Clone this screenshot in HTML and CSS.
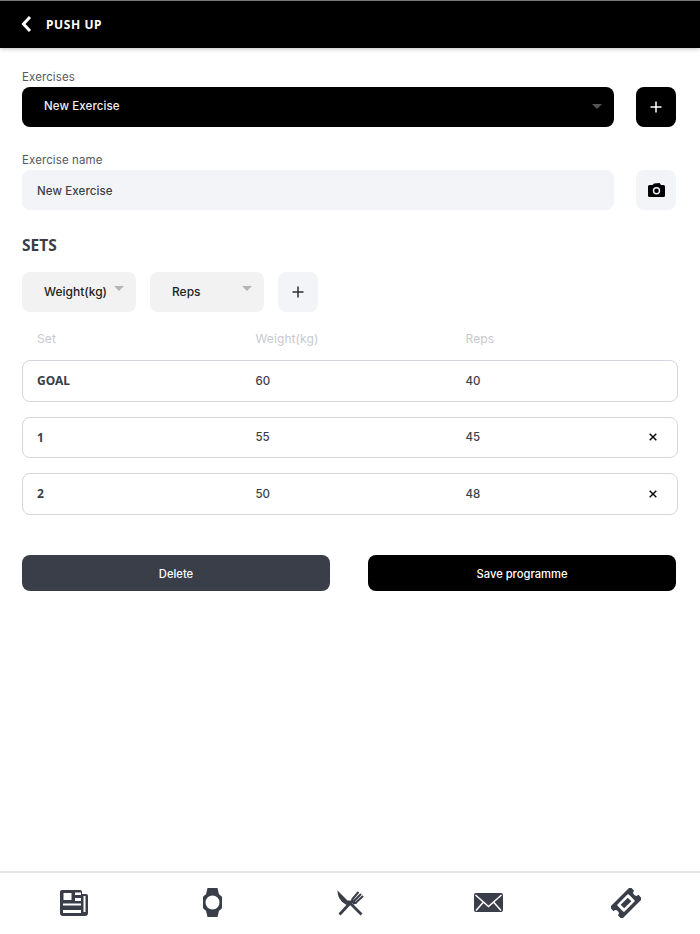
FILE: index.html
```html
<!DOCTYPE html>
<html lang="en">
<head>
<meta charset="utf-8">
<title>Push Up</title>
<link rel="stylesheet" href="styles.css">
</head>
<body>
<div class="page">
  <header class="topbar">
    <svg class="back" width="12" height="18" viewBox="0 0 12 18"><path d="M10 2 3.500 9 10 16" fill="none" stroke="#fff" stroke-width="3"/></svg>
    <span class="title">PUSH UP</span>
  </header>
  <main class="content">
    <label class="label first">Exercises</label>
    <div class="line">
      <div class="select select-dark"><span>New Exercise</span><i class="caret caret-dark"></i></div>
      <button class="square square-dark"><svg width="14" height="14" viewBox="0 0 14 14"><path d="M7 1.500v11M1.500 7h11" stroke="#fff" stroke-width="1.500"/></svg></button>
    </div>
    <label class="label second">Exercise name</label>
    <div class="line">
      <div class="input">New Exercise</div>
      <button class="square square-light"><svg width="17" height="14" viewBox="0 0 17 14"><path fill-rule="evenodd" fill="#000" d="M6 .5 11.500 0l1.500 2h2.500a1.500 1.500 0 0 1 1.500 1.500v9a1.500 1.500 0 0 1-1.500 1.500h-14A1.500 1.500 0 0 1 0 12.500v-9A1.500 1.500 0 0 1 1.500 2H4.500zM8.500 4a3.700 3.700 0 1 0 0 7.400 3.700 3.700 0 0 0 0-7.400zm0 1.400a2.300 2.300 0 1 1 0 4.600 2.300 2.300 0 0 1 0-4.600z"/></svg></button>
    </div>
    <h2 class="sets">SETS</h2>
    <div class="filters">
      <div class="chip chip-weight"><span>Weight(kg)</span><i class="caret caret-chip"></i></div>
      <div class="chip chip-reps"><span>Reps</span><i class="caret caret-chip"></i></div>
      <button class="square square-light"><svg width="12" height="12" viewBox="0 0 12 12"><path d="M6 .5v11M.5 6h11" stroke="#2c2f36" stroke-width="1.500"/></svg></button>
    </div>
    <div class="cols cols-head"><span>Set</span><span>Weight(kg)</span><span>Reps</span></div>
    <div class="cols row"><b>GOAL</b><span>60</span><span>40</span></div>
    <div class="cols row"><b>1</b><span>55</span><span>45</span><svg class="x" width="8" height="8" viewBox="0 0 8 8"><path d="M.7.7l6.600 6.600M7.300.7.700 7.300" stroke="#000" stroke-width="1.400"/></svg></div>
    <div class="cols row"><b>2</b><span>50</span><span>48</span><svg class="x" width="8" height="8" viewBox="0 0 8 8"><path d="M.7.7l6.600 6.600M7.300.7.700 7.300" stroke="#000" stroke-width="1.400"/></svg></div>
    <div class="actions">
      <button class="action action-delete">Delete</button>
      <button class="action action-save">Save programme</button>
    </div>
  </main>
  <nav class="tabbar">
    <div class="tab"><svg width="28" height="26" viewBox="0 0 28 26"><path fill="#3a3e48" fill-rule="evenodd" d="M2 0h18a2 2 0 0 1 2 2v2h4a2 2 0 0 1 2 2v17a3 3 0 0 1-3 3H3a3 3 0 0 1-3-3V2a2 2 0 0 1 2-2zM3.500 3v7h8V3zM15 2.500V5h6V2.500zM15 8v3h6V8zM3 13.500v2h18v-2zM3 20v3h18v-3zM23.500 6v16h2V6z"/></svg></div>
    <div class="tab"><svg width="19" height="29" viewBox="0 0 19 29"><path fill="#3a3e48" fill-rule="evenodd" d="M4.500 0h10l1.500 6.300a9.500 9.500 0 0 1 0 16.400L14.500 29h-10L3 22.700A9.500 9.500 0 0 1 3 6.300zM9.500 7.500a7 7 0 1 0 0 14 7 7 0 0 0 0-14z"/></svg></div>
    <div class="tab"><svg width="27" height="26" viewBox="0 0 27 26"><path fill="#3a3e48" d="M.5.500 14 14l-2.500 2L8 14C3 11 .5 6 .5.500z"/><path fill="none" stroke="#3a3e48" stroke-width="2.800" d="M11 11 24.500 24.500M2.500 24.500 16 10"/><path fill="none" stroke="#3a3e48" stroke-width="2" stroke-linecap="round" d="M15.500 9 21 2.500M17.500 10.500 23.500 4.500M19 12.500 25.500 6.500"/><path fill="#3a3e48" d="M15 8.500 20 13.500 16.500 14.500 14 11.500z"/></svg></div>
    <div class="tab"><svg width="29" height="19" viewBox="0 0 29 19"><rect width="29" height="19" rx="2" fill="#3a3e48"/><path d="M1.500 2 14.500 13.500 27.500 2M2 17.500 9.500 9M27 17.500 19.500 9" fill="none" stroke="#fff" stroke-width="1.500"/></svg></div>
    <div class="tab"><svg width="30" height="30" viewBox="-15 -15 30 30"><g transform="rotate(-45)"><path fill="#3a3e48" d="M-14.500-7a1.500 1.500 0 0 1 1.500-1.500h26a1.500 1.500 0 0 1 1.500 1.500v4a3 3 0 0 0 0 6v4a1.500 1.500 0 0 1-1.500 1.500h-26a1.500 1.500 0 0 1-1.500-1.500v-4a3 3 0 0 0 0-6z"/><rect x="-8" y="-5" width="16" height="10" rx="1" fill="#fff"/><rect x="-5" y="-2.500" width="10" height="5" fill="#3a3e48"/></g></svg></div>
  </nav>
</div>
</body>
</html>
```
FILE: styles.css
```css
* { box-sizing: border-box; }
html, body { margin: 0; padding: 0; height: 100%; background: #fff; }
body { font-family: "Inter", "Liberation Sans", sans-serif; color: #2c2f36; }
.page { height: 934px; display: flex; flex-direction: column; overflow: hidden; }
button { border: 0; padding: 0; font: inherit; display: flex; align-items: center; justify-content: center; }

.topbar { height: 48px; flex: none; background: #000; border-top: 1px solid #777; display: flex; align-items: center; padding: 0 0 1px 20px; box-shadow: 0 1px 4px rgba(0,0,0,.25); }
.back { margin-right: 14px; }
.title { color: #fff; font: 700 12px "Noto Sans", sans-serif; letter-spacing: .6px; }

.content { flex: 1; padding: 0 22px; }
.label { display: block; font-size: 11.500px; line-height: 15px; color: #555963; letter-spacing: .1px; }
.label.first { margin-top: 22px; margin-bottom: 2px; }
.label.second { margin-top: 26px; margin-bottom: 2px; }
.line { display: flex; gap: 22px; width: 654px; }

.select, .input { flex: 1; height: 40px; border-radius: 8px; display: flex; align-items: center; font-size: 11.500px; font-weight: 500; }
.select-dark { background: #000; color: #f0f0f0; padding: 0 12px 2px 22px; justify-content: space-between; letter-spacing: .1px; }
.input { background: #f3f4f8; color: #3a3e48; padding: 1px 0 0 15px; letter-spacing: .1px; }
.caret { display: block; width: 0; height: 0; border-left: 5px solid transparent; border-right: 5px solid transparent; }
.caret-dark { border-top: 5px solid #555; margin-top: 1px; }
.caret-chip { border-top: 5px solid #b5b5b5; margin-top: -5px; }

.square { width: 40px; height: 40px; flex: none; border-radius: 8px; }
.square-dark { background: #000; }
.square-light { background: #f3f4f8; }

.sets { margin: 26px 0 0; font: 700 15.500px/18px "Noto Sans", sans-serif; color: #3a3e48; }

.filters { display: flex; gap: 14px; margin-top: 18px; }
.chip { width: 114px; height: 40px; background: #f2f2f2; border-radius: 8px; display: flex; align-items: center; justify-content: space-between; font-size: 12px; font-weight: 500; color: #222; padding: 0 12px 2px 22px; }

.cols { display: grid; grid-template-columns: 218.500px 210px 1fr 12px; align-items: center; padding: 0 18px 0 15px; font-size: 12px; }
.cols-head { margin-top: 19px; height: 15px; width: 656px; color: #c6c9d1; letter-spacing: .1px; }
.row { height: 41.500px; width: 656px; border: 1px solid #d3d6dc; border-radius: 8px; margin-top: 15px; padding-left: 14px; font-size: 11.500px; font-weight: 500; color: #3a3e48; }
.cols-head + .row { margin-top: 14px; }
.row b { font: 700 12px "Noto Sans", sans-serif; color: #3a3e48; }
.x { justify-self: center; }

.actions { display: flex; gap: 38px; width: 654px; margin-top: 40.500px; }
.action { flex: 1; height: 36px; border-radius: 8px; color: #fff; font-size: 11.200px; font-weight: 500; padding-top: 1px; }
.action-delete { background: #3a3e48; }
.action-save { background: #000; }

.tabbar { height: 63px; flex: none; border-top: 2px solid #e4e4e4; display: grid; grid-template-columns: repeat(5, 1fr); padding: 0 5px 2px; }
.tab { display: flex; align-items: center; justify-content: center; }
```
